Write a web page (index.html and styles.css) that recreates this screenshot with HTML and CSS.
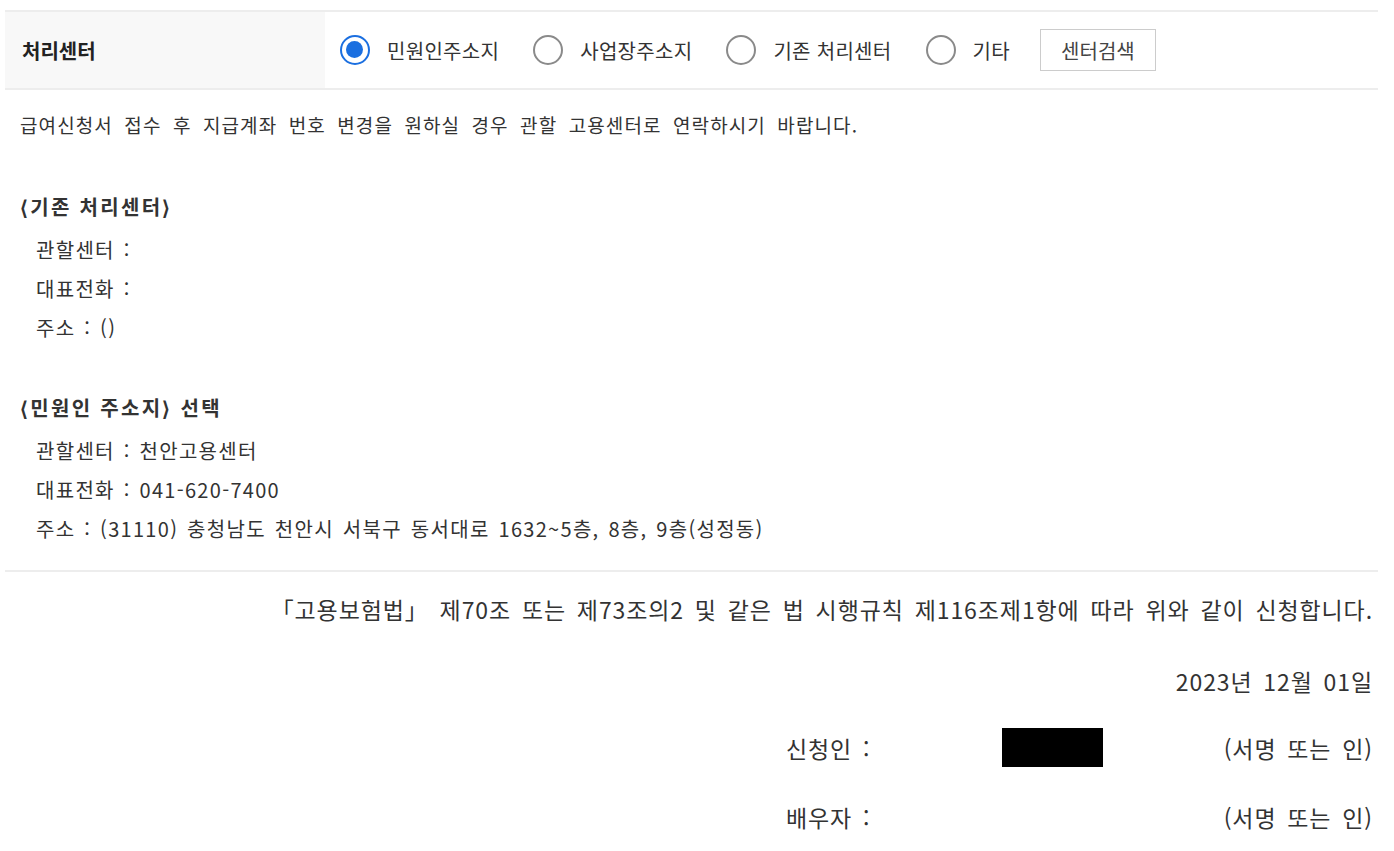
FILE: index.html
```html
<!DOCTYPE html>
<html lang="ko">
<head>
    <meta charset="UTF-8">
    <title>처리센터</title>
<link rel="stylesheet" href="styles.css">
</head>
<body>
    <div class="wrap">
        <!-- 처리센터 선택 -->
        <div class="row">
            <div class="row-label">처리센터</div>
            <div class="row-field">
                <label class="radio on"><span class="dot"></span>민원인주소지</label>
                <label class="radio"><span class="dot"></span>사업장주소지</label>
                <label class="radio"><span class="dot"></span>기존 처리센터</label>
                <label class="radio"><span class="dot"></span>기타</label>
                <a href="javascript:;" class="btn">센터검색</a>
            </div>
        </div>

        <div class="info">
            <p class="notice">급여신청서 접수 후 지급계좌 번호 변경을 원하실 경우 관할 고용센터로 연락하시기 바랍니다.</p>

            <h3>&lang;기존 처리센터&rang;</h3>
            <ul>
                <li>관할센터 :</li>
                <li>대표전화 :</li>
                <li>주소 : ()</li>
            </ul>

            <h3>&lang;민원인 주소지&rang; 선택</h3>
            <ul>
                <li>관할센터 : 천안고용센터</li>
                <li>대표전화 : 041-620-7400</li>
                <li>주소 : (31110) 충청남도 천안시 서북구 동서대로 1632~5층, 8층, 9층(성정동)</li>
            </ul>
        </div>

        <div class="sign">
            <p class="law">「고용보험법」 제70조 또는 제73조의2 및 같은 법 시행규칙 제116조제1항에 따라 위와 같이 신청합니다.</p>
            <p class="date">2023년 12월 01일</p>
            <div class="sign-row">
                <span>신청인 :</span>
                <span class="mask"></span>
                <span class="seal">(서명 또는 인)</span>
            </div>
            <div class="sign-row">
                <span>배우자 :</span>
                <span></span>
                <span class="seal">(서명 또는 인)</span>
            </div>
        </div>
    </div>
</body>
</html>
```

FILE: styles.css
```css
*{margin:0;padding:0;box-sizing:border-box;}
ol,ul{list-style:none;}
a{text-decoration:none;color:inherit;}
body{background:#fff;color:#333;font-family:"Noto Sans CJK KR","Noto Sans",sans-serif;font-size:20px;}

.wrap{width:1373px;margin:10px 0 0 5px;}

/* 처리센터 row */
.row{display:flex;height:80px;border-top:2px solid #ededed;border-bottom:2px solid #ededed;}
.row-label{width:320px;background:#f8f8f8;display:flex;align-items:center;padding-left:17px;font-weight:bold;font-size:20px;color:#222;}
.row-field{display:flex;align-items:center;padding-left:15px;}
.radio{display:flex;align-items:center;margin-right:34px;font-size:20px;letter-spacing:0.3px;color:#333;}
.radio .dot{width:30px;height:30px;border:2px solid #8a8a8a;border-radius:50%;margin-right:17px;position:relative;}
.radio.on .dot{border:2.5px solid #1b6fe0;}
.radio.on .dot:after{content:"";position:absolute;left:4px;top:4px;width:17px;height:17px;border-radius:50%;background:#1b6fe0;}
.btn{display:flex;align-items:center;justify-content:center;width:116px;height:42px;border:1px solid #ccc;font-size:20px;color:#444;margin-left:-4px;}

/* 안내 */
.info{padding:19px 0 22px 15px;border-bottom:2px solid #ededed;}
.notice{font-size:19px;line-height:32px;letter-spacing:1.1px;word-spacing:5px;}
.info h3{font-size:20px;font-weight:bold;color:#333;line-height:40px;margin-top:46px;letter-spacing:2.3px;}
.info ul + h3{margin-top:41px;}
.info ul{padding:3px 0 0 16px;}
.info li{line-height:39px;font-size:20px;letter-spacing:1.3px;word-spacing:2px;}

/* 신청 */
.sign{padding-right:5px;text-align:right;font-size:23px;letter-spacing:0.9px;word-spacing:3.5px;}
.law{line-height:36px;margin-top:19px;}
.date{line-height:36px;margin-top:36px;}
.sign-row{display:grid;grid-template-columns:216px 101px 1fr;align-items:center;width:587px;margin-left:auto;margin-top:29px;text-align:left;}
.sign-row + .sign-row{margin-top:33px;}
.sign-row .mask{display:block;height:39px;background:#000;}
.sign-row .seal{text-align:right;}
```
